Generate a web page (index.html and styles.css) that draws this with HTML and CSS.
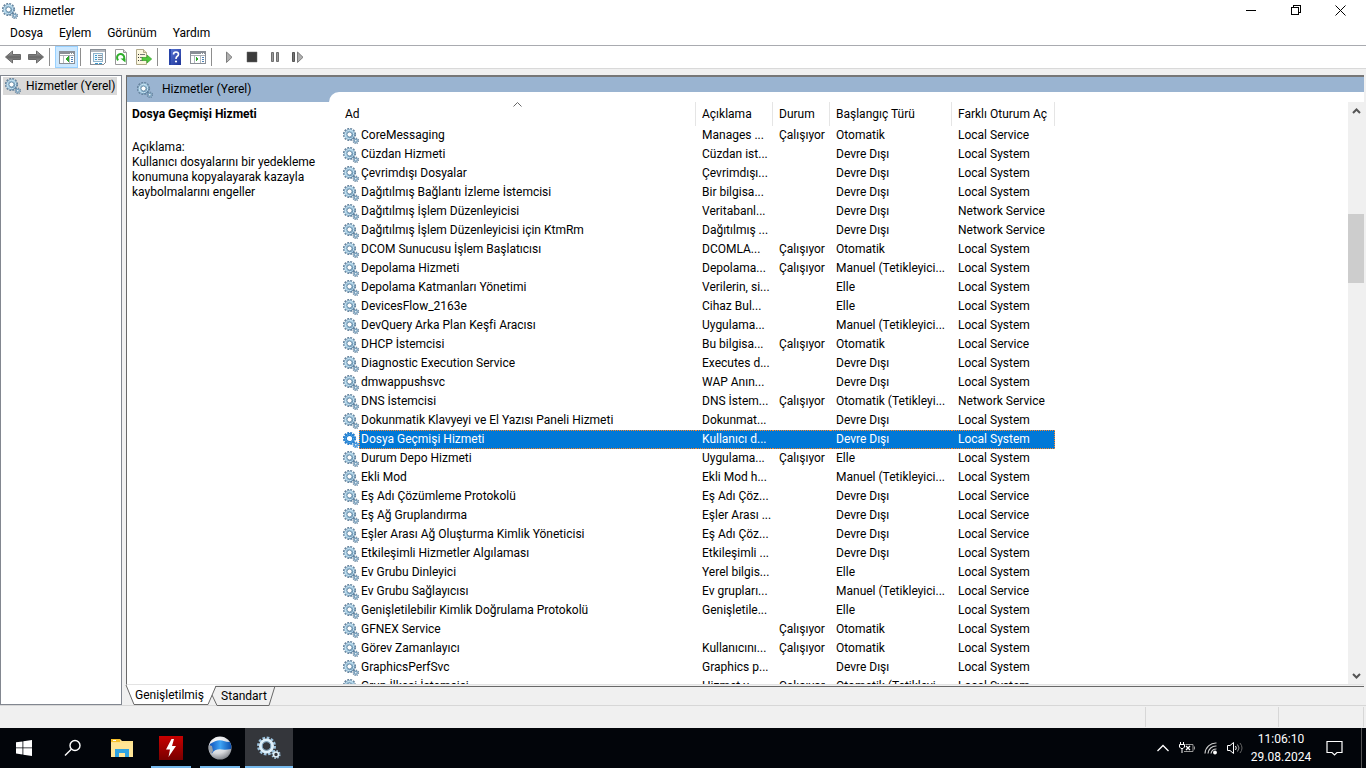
FILE: index.html
```html
<!DOCTYPE html>
<html lang="tr">
<head>
<meta charset="utf-8">
<title>Hizmetler</title>
<link rel="stylesheet" href="styles.css">
</head>
<body>
<svg class="defs" aria-hidden="true">
  <defs>
    <linearGradient id="steel" x1="0" y1="0" x2="1" y2="1"><stop offset="0" stop-color="#7d9fba"/><stop offset=".4" stop-color="#a6cfe6"/><stop offset="1" stop-color="#4f7a9e"/></linearGradient>
    <linearGradient id="arrow" x1="0" y1="0" x2="0" y2="1"><stop offset="0" stop-color="#b5b5b5"/><stop offset=".5" stop-color="#666"/><stop offset="1" stop-color="#a5a5a5"/></linearGradient>
    <linearGradient id="help" x1="0" y1="0" x2="1" y2="1"><stop offset="0" stop-color="#5a78d8"/><stop offset="1" stop-color="#1c3296"/></linearGradient>
    <linearGradient id="red" x1="0" y1="0" x2="0" y2="1"><stop offset="0" stop-color="#c80000"/><stop offset="1" stop-color="#780000"/></linearGradient>
    <radialGradient id="ball" cx=".4" cy=".25" r=".8"><stop offset="0" stop-color="#fff"/><stop offset=".6" stop-color="#d8dade"/><stop offset="1" stop-color="#777b82"/></radialGradient>
    <linearGradient id="band" x1="0" y1="0" x2="1" y2="0"><stop offset="0" stop-color="#0f4fb8"/><stop offset=".5" stop-color="#3fa4f5"/><stop offset="1" stop-color="#0c4fae"/></linearGradient>
  </defs>
  <symbol id="gear" viewBox="0 0 16 16">
    <circle cx="6.500" cy="6.500" r="5.700" fill="none" stroke="#66839c" stroke-width="1.800" stroke-dasharray="1.900 1.085"/>
    <circle cx="6.500" cy="6.500" r="4" fill="#fff" stroke="url(#steel)" stroke-width="2.800"/>
    <circle cx="6.500" cy="6.500" r="4.200" fill="none" stroke="#c9e4f2" stroke-width="1"/>
    <circle cx="6.500" cy="6.500" r="2.500" fill="none" stroke="#5b7f9b" stroke-width=".8"/>
    <circle cx="12.800" cy="12.800" r="2.600" fill="none" stroke="#66839c" stroke-width="1.300" stroke-dasharray="1.100 .940"/>
    <circle cx="12.800" cy="12.800" r="1.500" fill="#fff" stroke="#7ba2be" stroke-width="1.400"/>
  </symbol>
  <symbol id="gear-on" viewBox="0 0 16 16">
    <circle cx="6.500" cy="6.500" r="5.700" fill="none" stroke="#2b7cc8" stroke-width="1.800" stroke-dasharray="1.900 1.085"/>
    <circle cx="6.500" cy="6.500" r="4" fill="#fff" stroke="#1c80d4" stroke-width="2.800"/>
    <circle cx="6.500" cy="6.500" r="4" fill="none" stroke="#8cc4ee" stroke-width="1" stroke-dasharray="1 1"/>
    <circle cx="12.800" cy="12.800" r="2.600" fill="none" stroke="#2b7cc8" stroke-width="1.300" stroke-dasharray="1.100 .940"/>
    <circle cx="12.800" cy="12.800" r="1.500" fill="#fff" stroke="#3f94dc" stroke-width="1.400"/>
  </symbol>
</svg>

<header class="titlebar">
  <svg class="icon"><use href="#gear"/></svg>
  <h1 class="title">Hizmetler</h1>
  <div class="window-buttons">
    <button aria-label="Simge durumuna küçült"><svg width="10" height="11" shape-rendering="crispEdges"><path d="M0 5.500h10" stroke="#000"/></svg></button>
    <button aria-label="Önceki boyut"><svg width="10" height="11" fill="none" stroke="#000" shape-rendering="crispEdges"><path d="M.5 2.500h7v7h-7zM2.500 2.500v-2h7v7h-2"/></svg></button>
    <button aria-label="Kapat"><svg width="11" height="11" stroke="#000"><path d="M.5.5l10 10M10.500.5l-10 10"/></svg></button>
  </div>
</header>

<nav class="menubar">
  <button>Dosya</button><button>Eylem</button><button>Görünüm</button><button>Yardım</button>
</nav>

<div class="toolbar" role="toolbar">
  <button aria-label="Geri"><svg class="icon"><path d="M.5 8L7.500 2v3.500h8v5h-8V14z" fill="url(#arrow)" stroke="#6a6a6a"/></svg></button>
  <button aria-label="İleri"><svg class="icon"><path d="M15.500 8L8.500 2v3.500h-8v5h8V14z" fill="url(#arrow)" stroke="#6a6a6a"/></svg></button>
  <span class="sep"></span>
  <button class="pressed" aria-label="Konsol ağacı"><svg class="icon" shape-rendering="crispEdges"><path d="M.5 2.500h15v12H.5z" fill="#fff" stroke="#8a8f96"/><path d="M1 3h14v2H1z" fill="#8a8f96"/><path d="M11 4h1M13 4h1" stroke="#fff"/><path d="M1 6.500h14" stroke="#a8adb3"/><path d="M4.500 7v7M10.500 7v7" stroke="#b4b9bf"/><path d="M12 8.500h2M12 10.500h2M12 12.500h2" stroke="#4e83b8"/><path d="M9.500 7v6L6 10z" fill="#2fa82c"/></svg></button>
  <span class="sep"></span>
  <button aria-label="Özellikler"><svg class="icon" shape-rendering="crispEdges"><path d="M.5 .5h15v13l-2 2H.5z" fill="#fff" stroke="#8a8f96"/><path d="M1 1h14v2H1z" fill="#b4b9bf"/><path d="M3.500 4.500h9v8h-9z" fill="#eef7fc" stroke="#8fb4cc"/><path d="M5 6.500h2M5 8.500h2M5 10.500h2" stroke="#3a9ad0"/><path d="M8 6.500h4M8 8.500h4M8 10.500h4" stroke="#8a8f96"/><path d="M5 14h3M9 14h3" stroke="#3a9ad0"/></svg></button>
  <button aria-label="Yenile"><svg class="icon"><path d="M2.500.5h8l3 3v12h-11z" fill="#fff" stroke="#999"/><path d="M10.500.5v3h3" fill="#ddd" stroke="#999"/><path d="M5.300 11.300a3.600 3.600 0 1 1 5-.3" fill="none" stroke="#2fae2b" stroke-width="2"/><path d="M7.500 9.500h5v4z" fill="#2fae2b"/></svg></button>
  <button aria-label="Listeyi ver"><svg class="icon"><path d="M.5.5h7l3 3v12H.5z" fill="#fbf7df" stroke="#b0a98a"/><path d="M7.500.5v3h3" fill="#e4dcb8" stroke="#b0a98a"/><path d="M2 5.500h1M2 8.500h1M2 11.500h1" stroke="#333"/><path d="M4 5.500h5M4 8.500h3M4 11.500h3" stroke="#777"/><path d="M6 8.500h5V6l4.700 4-4.700 4v-2.500H6z" fill="#4ec83c" stroke="#36a02a" stroke-width=".7"/></svg></button>
  <span class="sep"></span>
  <button aria-label="Yardım"><svg class="icon"><path d="M2 0h12v16H2z" fill="url(#help)"/><path d="M2 0h2v16H2z" fill="#2743a8"/><path d="M6.500 5.500q0-2.500 2.500-2.500t2.500 2.300q0 1.400-1.500 2.200-1 .7-1 2.500" fill="none" stroke="#fff" stroke-width="1.600"/><circle cx="9" cy="12.500" r="1.100" fill="#fff"/></svg></button>
  <button aria-label="Eylem bölmesi"><svg class="icon" shape-rendering="crispEdges"><path d="M.5 2.500h15v12H.5z" fill="#fff" stroke="#8a8f96"/><path d="M1 3h14v2H1z" fill="#8a8f96"/><path d="M11 4h1M13 4h1" stroke="#fff"/><path d="M1 6.500h14" stroke="#a8adb3"/><path d="M4.500 7v7M10.500 7v7" stroke="#b4b9bf"/><path d="M12 8.500h2M12 10.500h2M12 12.500h2" stroke="#4e83b8"/><path d="M5.500 7v6L9 10z" fill="#2fa82c"/></svg></button>
  <span class="sep"></span>
  <button aria-label="Başlat"><svg class="icon"><path d="M5.500 3v10.500l5.500-5.200z" fill="#b0b0b0" stroke="#7d7d7d"/></svg></button>
  <button aria-label="Durdur"><svg class="icon"><path d="M3 3h10v10H3z" fill="#3c3c3c" stroke="#666" stroke-width=".5"/></svg></button>
  <button aria-label="Duraklat"><svg class="icon"><path d="M4.500 3.500h2v9h-2zM9.500 3.500h2v9h-2z" fill="#999" stroke="#6e6e6e"/></svg></button>
  <button aria-label="Yeniden başlat"><svg class="icon"><path d="M2.500 3.500h2v9h-2z" fill="#777" stroke="#555"/><path d="M7.500 3v10.500l5.500-5.200z" fill="#b0b0b0" stroke="#7d7d7d"/></svg></button>
</div>

<main class="workspace">
  <aside class="tree">
    <button class="tree-node"><svg class="icon"><use href="#gear"/></svg><span>Hizmetler (Yerel)</span></button>
  </aside>

  <section class="result">
    <div class="pane">
      <div class="extended">
        <div class="banner"><svg class="icon"><use href="#gear"/></svg><span>Hizmetler (Yerel)</span></div>
        <div class="details">
          <h2>Dosya Geçmişi Hizmeti</h2>
          <p>Açıklama:<br>Kullanıcı dosyalarını bir yedekleme konumuna kopyalayarak kazayla kaybolmalarını engeller</p>
        </div>
      </div>
      <div class="list-area">
        <div class="list">
          <table>
            <colgroup><col class="c-name"><col class="c-desc"><col class="c-state"><col class="c-start"><col class="c-logon"></colgroup>
            <thead><tr><th>Ad<svg class="sort" width="9" height="5"><path d="M.5 4.500l4-4 4 4" fill="none" stroke="#666"/></svg></th><th>Açıklama</th><th>Durum</th><th>Başlangıç Türü</th><th>Farklı Oturum Aç</th></tr></thead>
            <tbody>
              <tr><td><svg class="icon"><use href="#gear"/></svg>CoreMessaging</td><td>Manages ...</td><td>Çalışıyor</td><td>Otomatik</td><td>Local Service</td></tr>
              <tr><td><svg class="icon"><use href="#gear"/></svg>Cüzdan Hizmeti</td><td>Cüzdan ist...</td><td></td><td>Devre Dışı</td><td>Local System</td></tr>
              <tr><td><svg class="icon"><use href="#gear"/></svg>Çevrimdışı Dosyalar</td><td>Çevrimdışı...</td><td></td><td>Devre Dışı</td><td>Local System</td></tr>
              <tr><td><svg class="icon"><use href="#gear"/></svg>Dağıtılmış Bağlantı İzleme İstemcisi</td><td>Bir bilgisa...</td><td></td><td>Devre Dışı</td><td>Local System</td></tr>
              <tr><td><svg class="icon"><use href="#gear"/></svg>Dağıtılmış İşlem Düzenleyicisi</td><td>Veritabanl...</td><td></td><td>Devre Dışı</td><td>Network Service</td></tr>
              <tr><td><svg class="icon"><use href="#gear"/></svg>Dağıtılmış İşlem Düzenleyicisi için KtmRm</td><td>Dağıtılmış ...</td><td></td><td>Devre Dışı</td><td>Network Service</td></tr>
              <tr><td><svg class="icon"><use href="#gear"/></svg>DCOM Sunucusu İşlem Başlatıcısı</td><td>DCOMLA...</td><td>Çalışıyor</td><td>Otomatik</td><td>Local System</td></tr>
              <tr><td><svg class="icon"><use href="#gear"/></svg>Depolama Hizmeti</td><td>Depolama...</td><td>Çalışıyor</td><td>Manuel (Tetikleyici...</td><td>Local System</td></tr>
              <tr><td><svg class="icon"><use href="#gear"/></svg>Depolama Katmanları Yönetimi</td><td>Verilerin, si...</td><td></td><td>Elle</td><td>Local System</td></tr>
              <tr><td><svg class="icon"><use href="#gear"/></svg>DevicesFlow_2163e</td><td>Cihaz Bul...</td><td></td><td>Elle</td><td>Local System</td></tr>
              <tr><td><svg class="icon"><use href="#gear"/></svg>DevQuery Arka Plan Keşfi Aracısı</td><td>Uygulama...</td><td></td><td>Manuel (Tetikleyici...</td><td>Local System</td></tr>
              <tr><td><svg class="icon"><use href="#gear"/></svg>DHCP İstemcisi</td><td>Bu bilgisa...</td><td>Çalışıyor</td><td>Otomatik</td><td>Local Service</td></tr>
              <tr><td><svg class="icon"><use href="#gear"/></svg>Diagnostic Execution Service</td><td>Executes d...</td><td></td><td>Devre Dışı</td><td>Local System</td></tr>
              <tr><td><svg class="icon"><use href="#gear"/></svg>dmwappushsvc</td><td>WAP Anın...</td><td></td><td>Devre Dışı</td><td>Local System</td></tr>
              <tr><td><svg class="icon"><use href="#gear"/></svg>DNS İstemcisi</td><td>DNS İstem...</td><td>Çalışıyor</td><td>Otomatik (Tetikleyi...</td><td>Network Service</td></tr>
              <tr><td><svg class="icon"><use href="#gear"/></svg>Dokunmatik Klavyeyi ve El Yazısı Paneli Hizmeti</td><td>Dokunmat...</td><td></td><td>Devre Dışı</td><td>Local System</td></tr>
              <tr class="selected"><td><svg class="icon"><use href="#gear-on"/></svg><span class="label">Dosya Geçmişi Hizmeti</span></td><td>Kullanıcı d...</td><td></td><td>Devre Dışı</td><td>Local System</td></tr>
              <tr><td><svg class="icon"><use href="#gear"/></svg>Durum Depo Hizmeti</td><td>Uygulama...</td><td>Çalışıyor</td><td>Elle</td><td>Local System</td></tr>
              <tr><td><svg class="icon"><use href="#gear"/></svg>Ekli Mod</td><td>Ekli Mod h...</td><td></td><td>Manuel (Tetikleyici...</td><td>Local System</td></tr>
              <tr><td><svg class="icon"><use href="#gear"/></svg>Eş Adı Çözümleme Protokolü</td><td>Eş Adı Çöz...</td><td></td><td>Devre Dışı</td><td>Local Service</td></tr>
              <tr><td><svg class="icon"><use href="#gear"/></svg>Eş Ağ Gruplandırma</td><td>Eşler Arası ...</td><td></td><td>Devre Dışı</td><td>Local Service</td></tr>
              <tr><td><svg class="icon"><use href="#gear"/></svg>Eşler Arası Ağ Oluşturma Kimlik Yöneticisi</td><td>Eş Adı Çöz...</td><td></td><td>Devre Dışı</td><td>Local Service</td></tr>
              <tr><td><svg class="icon"><use href="#gear"/></svg>Etkileşimli Hizmetler Algılaması</td><td>Etkileşimli ...</td><td></td><td>Devre Dışı</td><td>Local System</td></tr>
              <tr><td><svg class="icon"><use href="#gear"/></svg>Ev Grubu Dinleyici</td><td>Yerel bilgis...</td><td></td><td>Elle</td><td>Local System</td></tr>
              <tr><td><svg class="icon"><use href="#gear"/></svg>Ev Grubu Sağlayıcısı</td><td>Ev grupları...</td><td></td><td>Manuel (Tetikleyici...</td><td>Local Service</td></tr>
              <tr><td><svg class="icon"><use href="#gear"/></svg>Genişletilebilir Kimlik Doğrulama Protokolü</td><td>Genişletile...</td><td></td><td>Elle</td><td>Local System</td></tr>
              <tr><td><svg class="icon"><use href="#gear"/></svg>GFNEX Service</td><td></td><td>Çalışıyor</td><td>Otomatik</td><td>Local System</td></tr>
              <tr><td><svg class="icon"><use href="#gear"/></svg>Görev Zamanlayıcı</td><td>Kullanıcını...</td><td>Çalışıyor</td><td>Otomatik</td><td>Local System</td></tr>
              <tr><td><svg class="icon"><use href="#gear"/></svg>GraphicsPerfSvc</td><td>Graphics p...</td><td></td><td>Devre Dışı</td><td>Local System</td></tr>
              <tr><td><svg class="icon"><use href="#gear"/></svg>Grup İlkesi İstemcisi</td><td>Hizmet y...</td><td>Çalışıyor</td><td>Otomatik (Tetikleyi...</td><td>Local System</td></tr>
            </tbody>
          </table>
        </div>
        <div class="scrollbar">
          <button aria-label="Yukarı"><svg width="9" height="6"><path d="M1 5l3.500-3.500L8 5" fill="none" stroke="#555" stroke-width="2"/></svg></button>
          <div class="track"><div class="thumb"></div></div>
          <button aria-label="Aşağı"><svg width="9" height="6"><path d="M1 1l3.500 3.500L8 1" fill="none" stroke="#555" stroke-width="2"/></svg></button>
        </div>
      </div>
    </div>
    <div class="tabs">
      <button class="tab current"><svg width="87" height="19"><path d="M0-1l8 19h74L90-1z" fill="#fff"/><path d="M0-1l8 19.500h74L90 0" fill="none" stroke="#696969"/></svg><span>Genişletilmiş</span></button>
      <button class="tab"><svg width="63" height="19"><path d="M-1 8l5 10.500h52L62-1" fill="none" stroke="#696969"/></svg><span>Standart</span></button>
      <span class="tab-line"></span>
    </div>
  </section>
</main>

<footer class="statusbar"><span></span><span></span><span></span></footer>

<div class="taskbar">
  <button class="task" aria-label="Başlat"><svg width="16" height="16" fill="#fff"><path d="M0 2.300L6.500 1.400v6.100H0zM7.300 1.300L16 0v7.500H7.300zM0 8.300h6.500v6.200L0 13.600zM7.300 8.300H16V16l-8.700-1.300z"/></svg></button>
  <button class="task" aria-label="Ara"><svg width="18" height="18" fill="none" stroke="#fff" stroke-width="1.400"><circle cx="11" cy="6.500" r="5"/><path d="M7.300 10.200L1 16.500"/></svg></button>
  <button class="task" aria-label="Dosya Gezgini"><svg width="22" height="20"><path d="M0 1h9l2 2h11v16H0z" fill="#ffe28a"/><path d="M0 1h9v3H0z" fill="#f5c02c"/><path d="M2 2h3v1H2z" fill="#fff"/><path d="M0 5h22v14H0z" fill="#ffe596"/><path d="M4 11h14v8h-4v-4H8v4H4z" fill="#2fa3e0"/></svg></button>
  <button class="task running" aria-label="Yıldırım"><svg width="24" height="24"><path d="M0 0h24v24H0z" fill="url(#red)"/><path d="M12.500 3L7 13.500h4L9.500 21 17 10h-4l2-7z" fill="#fff"/></svg></button>
  <button class="task running" aria-label="Tarayıcı"><svg width="24" height="24"><circle cx="12" cy="12" r="11.500" fill="url(#ball)"/><path d="M2 8q7-5 12-3.500t8 1.500q2 4 1 7-5 1-9 .5-7-1-10 4Q0 12 2 8z" fill="url(#band)"/><path d="M1 9l3 1 1 5-2 3Q0 14 1 9z" fill="#9aa0a8"/></svg></button>
  <button class="task running active" aria-label="Hizmetler"><svg width="24" height="24"><circle cx="9.500" cy="10" r="8.200" fill="none" stroke="#9cc3de" stroke-width="2.600" stroke-dasharray="2.600 1.690"/><circle cx="9.500" cy="10" r="6" fill="none" stroke="#dff0fa" stroke-width="3"/><circle cx="9.500" cy="10" r="4.300" fill="none" stroke="#86aecb"/><circle cx="19" cy="18.500" r="3.800" fill="none" stroke="#9cc3de" stroke-width="1.600" stroke-dasharray="1.500 1.480"/><circle cx="19" cy="18.500" r="2.500" fill="none" stroke="#dff0fa" stroke-width="1.600"/></svg></button>
  <div class="tray">
    <button aria-label="Gizli simgeler"><svg width="12" height="8"><path d="M.5 7L6 1.500 11.500 7" fill="none" stroke="#fff" stroke-width="1.300"/></svg></button>
    <button aria-label="Pil"><svg width="16" height="12" fill="none" stroke="#fff"><path d="M1.500 0v2M4.500 0v2M.5 2.500h5V5L4 6.500H2L.5 5zM3 7v4"/><path d="M6.500 2.500h7.500v7H5" stroke="#999"/><path d="M15.500 4.500v3" stroke="#999"/><path d="M7 4l4 4M11 4l-4 4" stroke-width="1.300"/></svg></button>
    <button aria-label="Ağ"><svg width="14" height="14" fill="none" stroke="#ccc" stroke-width="1.200"><path d="M1 12.500A11 11 0 0 1 12.500 2M4 12.500A8 8 0 0 1 12.500 5M7 12.500A5.500 5.500 0 0 1 12.500 8"/><circle cx="11" cy="11.500" r="1.300" fill="#fff" stroke="#fff"/></svg></button>
    <button aria-label="Ses"><svg width="17" height="14" fill="none" stroke="#fff"><path d="M.5 4.500h2.500L6.500 1.500v11L3 9.500H.5z"/><path d="M8.500 5q1.500 2 0 4"/><path d="M10.500 3.500q3 3.500 0 7" stroke="#999"/><path d="M13 2q4 5 0 10" stroke="#666"/></svg></button>
    <button class="clock"><time>11:06:10</time><time>29.08.2024</time></button>
    <button class="notify" aria-label="Bildirimler"><svg width="17" height="17"><path d="M1 1.500h15v11h-5L8.500 15 6 12.500H1z" fill="none" stroke="#fff" stroke-width="1.200"/></svg></button>
    <span class="peek"></span>
  </div>
</div>
</body>
</html>
```

FILE: styles.css
```css
* { box-sizing: border-box; }
body {
  margin: 0;
  height: 100vh;
  display: flex;
  flex-direction: column;
  background: #f0f0f0;
  color: #000;
  font: 12px/15px Roboto, "Open Sans", sans-serif;
  overflow: hidden;
}
button {
  margin: 0;
  padding: 0;
  border: 0;
  background: none;
  font: inherit;
  color: inherit;
  white-space: nowrap;
}
h1, h2, p { margin: 0; font: inherit; }
svg { display: block; flex: none; }
.defs { position: absolute; width: 0; height: 0; }
.icon { width: 16px; height: 16px; }

.titlebar { display: flex; align-items: center; gap: 5px; height: 22px; padding: 0 3px 0 2px; background: #fff; }
.title { flex: 1; }
.window-buttons { display: flex; }
.window-buttons button { width: 45px; height: 22px; padding-bottom: 2px; display: grid; place-items: center; }

.menubar { display: flex; gap: 16px; height: 24px; padding: 0 10px; background: #fff; border-bottom: 1px solid #a9abb0; }

.toolbar { display: flex; align-items: center; height: 23px; padding-left: 1px; background: #fff; border-bottom: 1px solid #d9d9d9; }
.toolbar button { width: 23px; height: 22px; display: grid; place-items: center; }
.toolbar .pressed { background: #cce8ff; border: 1px solid #99d1ff; }
.sep { width: 1px; height: 18px; margin: 0 5px 0 2px; background: #8d8d8d; }

.workspace { flex: 1; min-height: 0; display: flex; gap: 4px; padding-top: 6px; }
.tree { width: 122px; padding: 1px 2px; background: #fff; border: 1px solid #828790; }
.tree-node { display: flex; align-items: center; gap: 5px; width: 114px; height: 18px; padding-left: 2px; background: #d9d9d9; }

.result { flex: 1; min-width: 0; display: flex; flex-direction: column; padding-right: 2px; }
.pane { flex: 1; min-height: 0; display: flex; background: #9ab4d1; border-top: 2px solid #777; border-left: 1px solid #696969; border-bottom: 1px solid #e3e3e3; }
.extended { width: 202px; display: flex; flex-direction: column; }
.banner { display: flex; align-items: center; gap: 9px; height: 25px; padding-left: 10px; }
.details { flex: 1; padding: 5px 0 0 5px; background: #fff; }
.details h2 { margin-bottom: 18px; font-weight: 700; }
.list-area { flex: 1; min-width: 0; display: flex; margin-top: 15px; padding: 10px 0 0 9px; background: #fff; border-top-left-radius: 10px; }
.list { flex: 1; min-width: 0; overflow: hidden; }

table { width: 717px; table-layout: fixed; border-collapse: separate; border-spacing: 0; }
.c-name { width: 358px; }
.c-desc { width: 77px; }
.c-state { width: 57px; }
.c-start { width: 122px; }
.c-logon { width: 103px; }
th { position: relative; height: 24px; padding: 0 0 0 6px; text-align: left; font-weight: 400; white-space: nowrap; border-right: 1px solid #e5e5e5; }
th:first-child { padding-left: 7px; }
.sort { position: absolute; top: 0; left: 175px; }
td { height: 19px; padding: 0 0 0 6px; white-space: nowrap; }
td:first-child { display: flex; align-items: center; gap: 2px; padding-left: 5px; }
.selected td { color: #fff; background: #0078d7; border: 0 dotted #ff8728; border-width: 1px 0; }
.selected td:first-child { gap: 0; background: none; border: 0; }
.selected td:last-child { border-right-width: 1px; }
.label { flex: 1; height: 19px; padding: 1px; background: #0078d7; border: 1px dotted #ff8728; border-right: 0; }

.scrollbar { width: 16px; display: flex; flex-direction: column; background: #f0f0f0; }
.scrollbar button { height: 17px; display: grid; place-items: center; }
.track { flex: 1; padding-top: 95px; }
.thumb { height: 69px; background: #cdcdcd; }

.tabs { display: flex; height: 19px; margin-top: 1px; }
.tab { position: relative; width: 87px; height: 19px; }
.current { z-index: 1; }
.tab + .tab { width: 62px; border-top: 1px solid #696969; }
.tab svg { position: absolute; top: 0; left: 0; overflow: visible; }
.tab span { position: relative; }
.tab-line { flex: 1; border-top: 1px solid #696969; }

.statusbar { display: flex; height: 23px; padding: 1px 2px 1px 0; border-top: 1px solid #d7d7d7; }
.statusbar span { width: 85px; border-right: 1px solid #d7d7d7; }
.statusbar span:first-child { flex: 1; }
.statusbar span:nth-child(2) { width: 133px; }

.taskbar { display: flex; gap: 1px; height: 40px; background: #02050a; color: #fff; }
.task { width: 48px; display: grid; place-items: center; position: relative; }
.running::after { content: ""; position: absolute; left: 4px; right: 4px; bottom: 0; height: 2px; background: #76b9ed; }
.active { background: #34363b; }
.active::after { left: 0; right: 0; }
.tray { margin-left: auto; display: flex; align-items: stretch; }
.tray button { width: 24px; display: grid; place-items: center; }
.tray .clock { width: 68px; align-content: center; line-height: 18px; }
.tray .notify { width: 38px; }
.peek { width: 5px; margin-left: 8px; border-left: 1px solid #555; }
```
